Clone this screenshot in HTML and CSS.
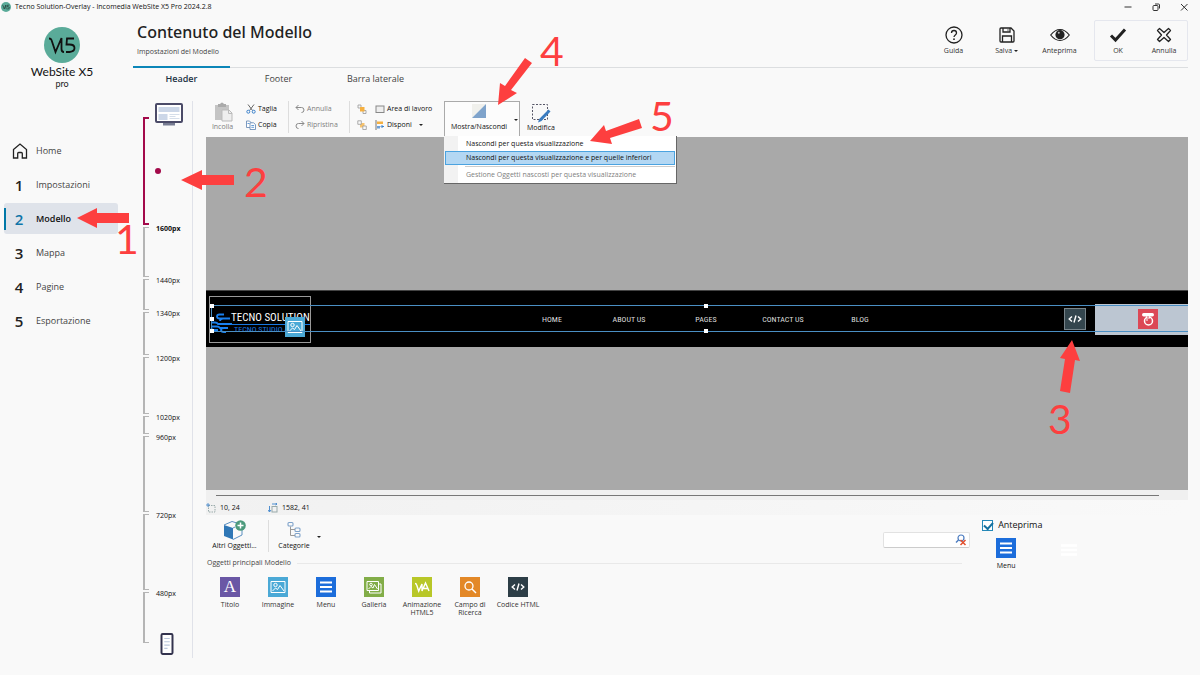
FILE: index.html
```html
<!DOCTYPE html>
<html lang="it">
<head>
<meta charset="utf-8">
<title>Tecno Solution-Overlay - Incomedia WebSite X5 Pro 2024.2.8</title>
<link rel="stylesheet" href="styles.css">
</head>
<body>
<svg class="defs" width="0" height="0">
  <symbol id="w5" viewBox="0 0 36 36"><circle cx="18" cy="18" r="18" fill="#5aab99"/><path d="M5 11.500q2 0 2.500 1.500L11.500 25 17.500 11v11q0 3 2.500 3M30 11.500h-7l-.5 6h3q5 0 5 3.500T25.500 25H22" fill="none" stroke="#111" stroke-width="1.800"/></symbol>
  <symbol id="bars" viewBox="0 0 20 20"><path d="M4 5.500h12M4 10h12M4 14.500h12" stroke="#fff" stroke-width="2" fill="none"/></symbol>
  <symbol id="photo" viewBox="0 0 20 20"><g fill="none" stroke="#fff" stroke-width="1"><path d="M3 4.500h14v11H3z"/><circle cx="7.500" cy="8" r="1.700"/><path d="M4.500 14l3-3 2 1.500 2.500-4 4 5.500"/></g></symbol>
  <symbol id="code" viewBox="0 0 20 20"><path d="M7 7.500L4.200 10 7 12.500M13 7.500l2.800 2.500-2.800 2.500M11 6.500l-2 7" stroke="#fff" stroke-width="1.400" fill="none"/></symbol>
</svg>

<header class="titlebar">
  <svg class="app-icon"><use href="#w5"/></svg>
  <span class="app-name">Tecno Solution-Overlay - Incomedia WebSite X5 Pro 2024.2.8</span>
  <button class="win" aria-label="Riduci"><svg viewBox="0 0 10 10"><path d="M1.500 5h7"/></svg></button>
  <button class="win" aria-label="Ripristina"><svg viewBox="0 0 10 10"><rect x="2" y="3.500" width="5" height="5" rx="1"/><path d="M4 2h3.500q1 0 1 1v3.500"/></svg></button>
  <button class="win" aria-label="Chiudi"><svg viewBox="0 0 10 10"><path d="M2 2l6.500 6.500M8.500 2L2 8.500"/></svg></button>
</header>

<div class="app">
  <aside class="sidebar">
    <div class="brand">
      <svg class="brand-icon"><use href="#w5"/></svg>
      <div class="brand-name">WebSite X5</div>
      <div class="brand-edition">pro</div>
    </div>
    <nav class="steps">
      <a href="#"><svg class="home" viewBox="0 0 16 16"><path d="M1.500 6.500L8 1l6.500 5.500V15h-4.200v-4.500q0-1-1-1H6.700q-1 0-1 1V15H1.500z"/></svg><span>Home</span></a>
      <a href="#"><b>1</b><span>Impostazioni</span></a>
      <a href="#" class="current" aria-current="page"><b>2</b><span>Modello</span></a>
      <a href="#"><b>3</b><span>Mappa</span></a>
      <a href="#"><b>4</b><span>Pagine</span></a>
      <a href="#"><b>5</b><span>Esportazione</span></a>
    </nav>
  </aside>

  <main class="content">
    <div class="page-head">
      <div class="heading">
        <h1>Contenuto del Modello</h1>
        <p>Impostazioni del Modello</p>
      </div>
      <div class="actions">
        <button><svg viewBox="0 0 20 20"><circle cx="10" cy="10" r="8" fill="none" stroke="#222" stroke-width="1.300"/><path d="M7.500 8q0-2.500 2.500-2.500T12.500 8q0 1-1.200 1.900T10 12" fill="none" stroke="#222" stroke-width="1.300"/><circle cx="10" cy="14.200" r=".9" fill="#222"/></svg><span>Guida</span></button>
        <button><svg viewBox="0 0 20 20"><path d="M3 4q0-1 1-1h10l3 3v10q0 1-1 1H4q-1 0-1-1zM6 3v4h7V3M5.500 17v-6h9v6M11 4.500v1" fill="none" stroke="#222" stroke-width="1.300"/></svg><span>Salva <i class="caret"></i></span></button>
        <button><svg viewBox="0 0 20 20"><path d="M.7 10Q5 4.500 10 4.500T19.300 10Q15 15.500 10 15.500T.7 10z" fill="none" stroke="#222" stroke-width="1.200"/><circle cx="10" cy="9.700" r="4.600" fill="#222"/><circle cx="8.800" cy="7.700" r="1" fill="#bbb"/></svg><span>Anteprima</span></button>
      </div>
      <div class="confirm">
        <button><svg viewBox="0 0 20 20"><path d="M3 10.500l4.500 4.500L17 4.500" fill="none" stroke="#222" stroke-width="3"/></svg><span>OK</span></button>
        <button><svg viewBox="0 0 20 20"><path d="M5.500 3.500L10 7.500l4.500-4 2 2-4 4.500 4 4.500-2 2-4.500-4-4.500 4-2-2 4-4.500-4-4.500z" fill="none" stroke="#222" stroke-width="1.300" stroke-linejoin="round"/></svg><span>Annulla</span></button>
      </div>
    </div>

    <nav class="tabs">
      <a href="#" class="active">Header</a>
      <a href="#">Footer</a>
      <a href="#">Barra laterale</a>
    </nav>

    <div class="work">
      <div class="rail">
        <svg class="monitor" viewBox="0 0 28 24"><rect x="1" y="1" width="26" height="18" rx="1" fill="#fff" stroke="#4b4b68" stroke-width="2"/><path d="M3.500 4h21v5h-21zM3.500 11h9v6h-9z" fill="#ccd7e8"/><path d="M14.500 11.500h10M14.500 13.500h6M14.500 15.500h10" stroke="#d5deea"/><path d="M8 20h12v2.500H8z" fill="#777c92"/></svg>
        <div class="scale">
          <div class="seg on"><i class="dot"></i></div>
          <div class="seg"><b>1600px</b></div>
          <div class="seg"><span>1440px</span></div>
          <div class="seg"><span>1340px</span></div>
          <div class="seg"><span>1200px</span></div>
          <div class="seg"><span>1020px</span></div>
          <div class="seg"><span>960px</span></div>
          <div class="seg"><span>720px</span></div>
          <div class="seg"><span>480px</span></div>
        </div>
        <svg class="phone" viewBox="0 0 12 20"><rect x="1" y="1" width="10" height="18" rx="1" fill="#fff" stroke="#33334e" stroke-width="1.800"/><path d="M3.500 5h5M3.500 8h5M3.500 11h5M3.500 14h3" stroke="#b9c6dc"/></svg>
      </div>

      <div class="editor">
        <div class="toolbar">
          <button class="tall paste" disabled><svg viewBox="0 0 20 20"><path d="M2 3h14v15H2z" fill="#c4c4c4"/><path d="M5 2h2q2-3 4 0h2v3H5z" fill="#aaa"/><path d="M9 8h7l3 3v8H9z" fill="#eee" stroke="#bbb"/><path d="M15.500 8v3.500H19" fill="none" stroke="#bbb"/></svg><span>Incolla</span></button>
          <div class="group cut">
            <button><svg viewBox="0 0 10 10"><path d="M2 .5l4.500 6M8 .5L3.500 6.500" stroke="#666" fill="none"/><g fill="none" stroke="#3d83cc"><circle cx="2.300" cy="7.700" r="1.500"/><circle cx="7.700" cy="7.700" r="1.500"/></g></svg>Taglia</button>
            <button><svg viewBox="0 0 10 10"><g fill="#fff" stroke="#6d8fb8" stroke-width=".9"><path d="M.5 1h3l1.500 1.500v5H.5z"/><path d="M4 2.800h3.500L9.500 4.500v5H4z"/></g><path d="M5.300 5.500h2.800M5.300 7.300h2.800M1.500 3.500h2" stroke="#3d83cc" stroke-width=".8"/></svg>Copia</button>
          </div>
          <div class="group undo">
            <button disabled><svg viewBox="0 0 10 10"><path d="M3.500 1L1 3.500 3.500 6M1 3.500h5.500q2.500 0 2.500 2.500T6.500 8.500" fill="none" stroke="#8a8a8a"/></svg>Annulla</button>
            <button disabled><svg viewBox="0 0 10 10"><path d="M6.500 1L9 3.500 6.500 6M9 3.500H3.500Q1 3.500 1 6t2.500 2.500" fill="none" stroke="#8a8a8a"/></svg>Ripristina</button>
          </div>
          <div class="group order">
            <button aria-label="Porta avanti"><svg viewBox="0 0 10 10"><path d="M1 1h3v3H1zM6 6.500h3v3H6z" fill="none" stroke="#999" stroke-width=".8"/><path d="M3 3h4.500v4.500H3z" fill="#f5b041"/></svg></button>
            <button aria-label="Porta indietro"><svg viewBox="0 0 10 10"><path d="M3 3h4.500v4.500H3z" fill="#f8c36c"/><path d="M.8.800h3.500v3.500H.8zM5.800 6h3.500v3.500H5.800z" fill="#f9f9f9" stroke="#999" stroke-width=".8"/></svg></button>
          </div>
          <div class="group area">
            <button><svg viewBox="0 0 10 10"><rect x="1" y="2" width="8" height="6.500" fill="#eee" stroke="#888"/></svg>Area di lavoro</button>
            <button><svg viewBox="0 0 10 10"><path d="M1 0v10" stroke="#777"/><path d="M2 1.500h6v2.500H2z" fill="#f5b041"/><path d="M2 6h3v2.500H2z" fill="#6da0d8"/><path d="M9 6.500H6.500M7.500 5L6 6.500 7.500 8" stroke="#3d83cc" fill="none"/></svg>Disponi <i class="caret"></i></button>
          </div>
          <div class="dropdown">
            <button class="tall toggle" aria-expanded="true"><svg viewBox="0 0 14 14"><path d="M0 0h14L0 14z" fill="#f0f0ec"/><path d="M14 0v14H0z" fill="#7fa3cb"/></svg><span>Mostra/Nascondi</span><i class="caret"></i></button>
            <div class="menu" role="menu">
              <button role="menuitem">Nascondi per questa visualizzazione</button>
              <button role="menuitem" class="hover">Nascondi per questa visualizzazione e per quelle inferiori</button>
              <hr>
              <button role="menuitem" disabled>Gestione Oggetti nascosti per questa visualizzazione</button>
            </div>
          </div>
          <button class="tall edit"><svg viewBox="0 0 20 20"><rect x="1.500" y="1.500" width="15" height="15" fill="none" stroke="#556" stroke-dasharray="2 1.500"/><path d="M17.500 6.500l2 2-9 9.500-3.500 1.500 1.200-3.500z" fill="#3a7cc0"/></svg><span>Modifica</span></button>
        </div>

        <div class="canvas">
          <div class="site-header">
            <div class="site-logo">
              <svg class="waves" viewBox="0 0 22 22"><path d="M14 1.500H9.500q-2.500 0-2.500 2t2.500 2H20M1 9.500h4q2 0 3 1.500h14M13 5.500q-3 0-3 2.500M2 13.500h5q2 0 3 1.500h3M8 17H4q-2.500 0-2.500-1.700M18 15h-4q-3 0-3 2t3 2h2" fill="none" stroke="#1a80ee" stroke-width="1.800"/></svg>
              <div class="logo-text"><span>TECNO SOLUTION</span><small>TECNO STUDIO A&nbsp;&nbsp;&nbsp;T</small></div>
              <svg class="badge photo"><use href="#photo"/></svg>
            </div>
            <nav class="site-nav">
              <a href="#">HOME</a><a href="#">ABOUT US</a><a href="#">PAGES</a><a href="#">CONTACT US</a><a href="#">BLOG</a>
            </nav>
            <div class="site-html"><svg><use href="#code"/></svg></div>
            <div class="site-cta"><svg viewBox="0 0 20 20"><rect width="20" height="20" fill="#dc4856"/><rect x="4" y="4" width="12" height="3.500" rx="1.700" fill="#fff"/><circle cx="10.500" cy="12" r="4" fill="none" stroke="#fff" stroke-width="1.500"/><path d="M9 12V6.500h2V10" fill="#dc4856" stroke="#fff"/></svg></div>
            <div class="selection"><i class="tl"></i><i class="ml"></i><i class="bl"></i><i class="tc"></i><i class="bc"></i></div>
          </div>
        </div>
        <div class="hscroll"><div></div></div>
        <div class="status">
          <span><svg viewBox="0 0 10 10"><rect x="2.500" y="2.500" width="6.500" height="6.500" fill="none" stroke="#9aa" stroke-dasharray="1.500 1"/><path d="M0 2h4M2 0v4" stroke="#3d83cc" stroke-width=".8"/></svg>10, 24</span>
          <span><svg viewBox="0 0 10 10"><rect x="4" y="3.500" width="5" height="5.500" fill="none" stroke="#9aa"/><path d="M4 1h5M1.500 3v5.500M0 7l1.500 2L3 7M7.500 0L9 1 7.500 2" fill="none" stroke="#3d83cc" stroke-width=".9"/></svg>1582, 41</span>
        </div>

        <div class="library">
          <section class="objects">
            <div class="objects-bar">
              <button class="tall other"><svg viewBox="0 0 24 20"><path d="M1 5l9 3v11.500L1 16z" fill="#2f77b6"/><path d="M1 5l8-3.500L19 4.500M10 8l2-1M10 19.500L19 15v-5" fill="none" stroke="#5a8fc0"/><circle cx="17.500" cy="5.500" r="5.300" fill="#4c9a7c"/><path d="M14.500 5.500h6M17.500 2.500v6" stroke="#fff" stroke-width="1.500"/></svg><span>Altri Oggetti...</span></button>
              <button class="tall cats"><svg viewBox="0 0 20 20"><g fill="none" stroke="#7fa3cb" stroke-width="1.100"><rect x="4" y="2.500" width="5" height="3.500" rx="1"/><rect x="11" y="8" width="5" height="3.500" rx="1"/><rect x="11" y="13.500" width="5" height="3.500" rx="1"/></g><path d="M6.500 6.500v9H11M6.500 9.500H11" fill="none" stroke="#999"/></svg><span>Categorie</span><i class="caret"></i></button>
              <div class="search"><input type="text" aria-label="Cerca"><svg viewBox="0 0 12 12"><circle cx="6" cy="4" r="3" fill="none" stroke="#4c7cc0" stroke-width="1.200"/><path d="M3.500 6L1 8.500" stroke="#4c7cc0" stroke-width="1.500"/><path d="M5.500 6l5 5M10.500 6l-5 5" stroke="#e2502e" stroke-width="1.500"/></svg></div>
            </div>
            <h2>Oggetti principali Modello</h2>
            <div class="palette">
              <button><i class="tile violet">A</i>Titolo</button>
              <button><i class="tile sky"><svg><use href="#photo"/></svg></i>Immagine</button>
              <button><i class="tile blue"><svg><use href="#bars"/></svg></i>Menu</button>
              <button><i class="tile green"><svg viewBox="0 0 20 20"><g fill="none" stroke="#fff"><path d="M3 4.500h11.500v9H3z"/><path d="M15 7h2v9H5.500v-2"/><circle cx="7" cy="7.500" r="1.300"/><path d="M4.500 12l2.500-2.500L9 11l1.500-3.500 3 4.500"/></g></svg></i>Galleria</button>
              <button><i class="tile lime"><svg viewBox="0 0 20 20"><path d="M3 6.500q1.300 0 1.700 1.500l2 6L10 7v7l3.500-8 3.500 8M12 11.500h4" fill="none" stroke="#fff" stroke-width="1.400"/></svg></i>Animazione HTML5</button>
              <button><i class="tile orange"><svg viewBox="0 0 20 20"><circle cx="9" cy="9" r="4" fill="none" stroke="#fff" stroke-width="1.300"/><path d="M12 12l4 4" stroke="#fff" stroke-width="1.500"/></svg></i>Campo di Ricerca</button>
              <button><i class="tile dark"><svg><use href="#code"/></svg></i>Codice HTML</button>
            </div>
          </section>
          <section class="preview">
            <label><input type="checkbox" checked><span>Anteprima</span></label>
            <div class="preview-items">
              <button><i class="tile blue"><svg><use href="#bars"/></svg></i>Menu</button>
              <svg class="ghost" viewBox="0 0 16 20"><path d="M0 5.500h16M0 10h16M0 14.500h16" stroke="#fff" stroke-width="2.500"/></svg>
            </div>
          </section>
        </div>
      </div>
    </div>
  </main>
</div>

<svg class="notes" viewBox="0 0 1200 675">
  <path d="M77 218l20-10v5h32v10H97v5z"/>
  <path d="M181 180l21-10v5h32v10h-32v5z"/>
  <path d="M1072 340l8 21-5-1-5 33-10-2 5-32-5-1z"/>
  <path d="M498 105l2-22 5 3 20-28 7 5-21 27 6 3z"/>
  <path d="M590 141l14-16 2 6 33-12 3 9-32 10 2 6z"/>
  <text x="115" y="254">1</text>
  <text x="244" y="197">2</text>
  <text x="1048" y="434">3</text>
  <text x="540" y="66">4</text>
  <text x="650" y="131">5</text>
</svg>
</body>
</html>
```

FILE: styles.css
```css
* { box-sizing: border-box; }
body {
  position: relative;
  display: flex;
  flex-direction: column;
  min-height: 100vh;
  margin: 0;
  background: #f9f9f9;
  color: #111;
  font: 7px/10px "Open Sans", "Noto Sans", sans-serif;
}
button {
  margin: 0;
  padding: 0;
  border: 0;
  background: none;
  color: inherit;
  font: inherit;
}
a { color: inherit; text-decoration: none; }
i { font-style: normal; }
svg { flex: none; }
.defs { position: absolute; }
.caret {
  display: inline-block;
  border: 2px solid transparent;
  border-top-color: #222;
  border-bottom: 0;
  vertical-align: middle;
}

.titlebar { display: flex; align-items: center; height: 14px; padding: 0 11px 0 1px; }
.app-icon { width: 10px; height: 10px; }
.app-name { flex: 1; margin-left: 4px; white-space: nowrap; }
.win { display: flex; width: 10px; margin-left: 18px; }
.win svg { width: 10px; height: 10px; fill: none; stroke: #333; }

.app { display: flex; flex: 1; }
.sidebar { flex: none; width: 133px; }
.brand { width: 124px; height: 121px; padding-top: 13px; text-align: center; color: #222; font-family: Lato, sans-serif; }
.brand-icon { display: block; width: 36px; height: 36px; margin: 0 auto; }
.brand-name { margin-top: 3px; font-size: 12px; line-height: 12px; color: #111; }
.brand-edition { font-size: 9px; line-height: 12px; }
.steps { display: flex; flex-direction: column; gap: 3px; width: 118px; padding-left: 4px; }
.steps a { display: flex; align-items: center; height: 31px; border-left: 1px solid transparent; font-size: 9px; color: #444; }
.steps b { width: 16px; margin: 0 9px 0 6px; font-size: 15px; font-weight: 600; text-align: center; color: #222; }
.steps .home { width: 16px; height: 16px; margin: 0 8px 0 7px; fill: none; stroke: #222; stroke-width: 1.300; }
.steps .current { border-radius: 3px; background: linear-gradient(#0078a8, #0078a8) 0 50% / 2px 22px no-repeat #dfe3ea; background-origin: border-box; color: #111; }
.steps .current b { color: #0f75a8; }
.steps .current span { font-weight: 600; }

.content { display: flex; flex: 1; flex-direction: column; min-width: 0; }
.page-head { display: flex; height: 53px; padding: 6px 12px 6px 4px; }
.heading { flex: 1; }
h1 { margin: 0; font: 500 16px/24px "Noto Sans", sans-serif; color: #222; white-space: nowrap; }
.heading p { margin: 3px 0 0; color: #444; }
.actions, .confirm { display: flex; align-items: center; }
.actions button, .confirm button { display: flex; flex-direction: column; align-items: center; gap: 1px; color: #333; }
.actions button { width: 53px; }
.actions { margin-right: 8px; }
.actions svg, .confirm svg { width: 20px; height: 20px; }
.confirm { height: 41px; border: 1px solid #e5e7ee; border-radius: 2px; }
.confirm button { width: 46px; }

.tabs { display: flex; margin-right: 12px; border-top: 1px solid #dcdee0; }
.tabs a { width: 97px; height: 22px; margin-top: -2px; padding-top: 4px; border-top: 2px solid transparent; font-size: 9px; line-height: 14px; text-align: center; color: #444; }
.tabs .active { border-color: #0c86b8; color: #234; font-weight: 600; }

.work { display: flex; flex: 1; margin: 13px 12px 0 0; }
.rail { flex: none; width: 60px; height: 557px; padding: 2px 0 0 10px; border-right: 1px solid #e0e2e9; }
.monitor { display: block; width: 28px; height: 24px; margin-left: 12px; }
.scale {
  display: grid;
  grid-template-rows: 108px 50px 31px 43px 57px 18px 76px 76px 51px;
  gap: 2px;
  margin-top: -10px;
}
.seg { position: relative; width: 6px; border: 1px solid #b5b5b5; border-right: 0; border-left-width: 2px; white-space: nowrap; }
.seg b, .seg span { display: block; margin: -5px 0 0 11px; line-height: 12px; }
.seg.on { border-color: #a30a4a; border-width: 2px 0 2px 2px; }
.dot { display: block; width: 6px; height: 6px; margin: 49px 0 0 10px; border-radius: 50%; background: #a30a4a; }
.phone { display: block; width: 14px; height: 22px; margin: -10px 0 0 17px; }

.editor { display: flex; flex: 1; flex-direction: column; min-width: 0; margin-left: 13px; }
.toolbar { display: flex; height: 36px; }
.toolbar button, .objects-bar button { white-space: nowrap; }
.tall { display: flex; flex-direction: column; align-items: center; }
.tall svg { width: 20px; height: 20px; }
button:disabled { color: #808080; }
.paste { width: 33px; padding-top: 1px; }
.group { display: flex; flex-direction: column; justify-content: center; gap: 3px; height: 32px; border-right: 1px solid #ddd; }
.group button { display: flex; align-items: center; gap: 2px; height: 13px; }
.group svg { width: 10px; height: 10px; }
.group .caret { margin-left: 5px; }
.cut { width: 50px; padding-left: 7px; }
.undo { width: 61px; padding-left: 6px; }
.order { width: 21px; padding-left: 7px; border: 0; }
.area { flex: none; width: 73px; padding-left: 4px; border: 0; }
.dropdown { position: relative; z-index: 1; width: 76px; }
.toggle { position: relative; width: 76px; height: 36px; padding: 2px 6px 0 0; border: 1px solid #aaa; border-bottom: 0; background: #fcfcfc; }
.toggle svg { width: 14px; height: 14px; margin-bottom: 4px; }
.toggle .caret { position: absolute; top: 17px; right: 1px; }
.menu { position: absolute; top: 35px; left: 0; width: 233px; padding: 1px 1px; border-right: 1px solid #666; border-bottom: 1px solid #666; background: linear-gradient(90deg, #f2f2f2 14px, #fff 14px); }
.menu button { display: block; width: 100%; height: 14px; padding: 0 0 0 20px; border: 1px solid transparent; text-align: left; }
.menu .hover { border-color: #4ba3e0; background: #b3d7f3; }
.menu hr { margin: 1px 0 1px 20px; border: 0; border-top: 1px solid #ccc; }
.edit { width: 42px; padding-top: 2px; }

.canvas { height: 353px; padding-top: 153px; background: #a9a9a9; }
.site-header { position: relative; display: flex; align-items: center; height: 57px; padding-left: 3px; border-top: 1px solid #444; background: #000; }
.site-logo { position: relative; display: flex; align-items: center; flex: none; width: 102px; height: 47px; border: 1px solid #999; }
.waves { width: 22px; height: 22px; margin-top: 9px; }
.logo-text { margin: 7px 0 0 -1px; color: #fff; font: 11px/13px "Roboto Condensed", "Liberation Sans Narrow", Roboto, sans-serif; white-space: nowrap; }
.logo-text span { display: block; }
.logo-text small { display: block; padding-left: 3px; border-top: 1px solid #1877e0; color: #1877e0; font-size: 8px; line-height: 9px; }
.badge { position: absolute; right: 5px; bottom: 5px; width: 20px; height: 20px; background: #4ba9d6; }
.site-nav { display: grid; flex: 1; grid-template-columns: repeat(5, 77px); justify-content: center; padding: 2px 0 0 37px; color: #ddd; font: 8px/10px "Roboto Condensed", "Liberation Sans Narrow", Roboto, sans-serif; text-align: center; white-space: nowrap; }
.site-html { display: flex; flex: none; width: 22px; height: 22px; margin-right: 9px; border: 1px solid #78848a; background: #34464e; }
.site-html svg { width: 20px; height: 20px; }
.site-cta { display: flex; flex: none; align-items: center; justify-content: center; width: 93px; height: 31px; padding-left: 13px; background: #bcc6d2; }
.site-cta svg { width: 20px; height: 20px; }
.selection { position: absolute; top: 14px; left: 5px; right: 0; height: 27px; border: 1px solid #4a8fc4; border-right: 0; }
.selection i { position: absolute; width: 4px; height: 4px; background: #fff; }
.selection .tl { top: -2px; left: -2px; }
.selection .ml { top: 11px; left: -2px; }
.selection .bl { bottom: -2px; left: -2px; }
.selection .tc { top: -2px; left: 50%; margin-left: 4px; }
.selection .bc { bottom: -2px; left: 50%; margin-left: 4px; }

.hscroll { height: 10px; padding: 5px 29px 0 10px; background: #f0f0f0; }
.hscroll div { height: 1px; background: #777; }
.status { display: flex; height: 15px; background: linear-gradient(90deg, #f1f1f1, #f9f9f9); }
.status span { display: flex; align-items: center; gap: 4px; width: 62px; }
.status svg { width: 10px; height: 10px; }

.library { display: flex; gap: 20px; }
.objects { flex: none; width: 77%; }
.objects-bar { display: flex; height: 43px; padding-top: 5px; }
.other { width: 63px; height: 32px; padding-right: 5px; border-right: 1px solid #ddd; }
.other svg { width: 24px; height: 20px; }
.tall.other, .tall.cats { gap: 1px; }
.cats { position: relative; width: 50px; }
.cats .caret { position: absolute; top: 16px; right: -2px; }
.search { position: relative; width: 87px; height: 16px; margin: 12px -8px 0 auto; }
.search input { display: block; width: 100%; height: 100%; border: 1px solid #e2e2e2; border-bottom-color: #ccc; border-radius: 2px; background: #fff; font: inherit; }
.search svg { position: absolute; top: 2px; right: 3px; width: 12px; height: 12px; }
h2 { display: flex; align-items: center; gap: 6px; margin: 0 0 0 1px; font: inherit; color: #444; }
h2::after { flex: 1; border-top: 1px solid #e9e9e9; content: ""; }
.palette { display: flex; margin-top: 9px; }
.palette button { display: flex; flex-direction: column; align-items: center; width: 48px; line-height: 8px; color: #333; }
.tile { display: flex; align-items: center; justify-content: center; width: 20px; height: 20px; margin-bottom: 4px; }
.tile svg { width: 20px; height: 20px; }
.violet { background: #6a57a5; color: #fff; font: 17px/20px "Liberation Serif", serif; }
.sky { background: #4ba9d6; }
.blue { background: #1c6ddb; }
.green { background: #82ad48; }
.lime { background: #b8c728; }
.orange { background: #e38827; }
.dark { background: #2d3e47; }

.preview { flex: 1; padding-top: 4px; }
.preview label { display: flex; align-items: center; gap: 5px; height: 12px; font-size: 9px; }
.preview input { appearance: none; width: 11px; height: 11px; margin: 0; border: 1px solid #2589b8; background: #fff; }
.preview input::before { display: block; width: 7px; height: 4px; margin: 1px; border: solid #16719f; border-width: 0 0 2px 2px; transform: rotate(-48deg); content: ""; }
.preview-items { display: flex; gap: 45px; margin: 7px 0 0 14px; }
.preview-items button { line-height: 8px; }
.ghost { width: 16px; height: 20px; margin-top: 2px; }

.notes { position: absolute; top: 0; left: 0; z-index: 2; width: 1200px; height: 675px; fill: #fd3f3f; font: 41px Lato, sans-serif; pointer-events: none; }
```
